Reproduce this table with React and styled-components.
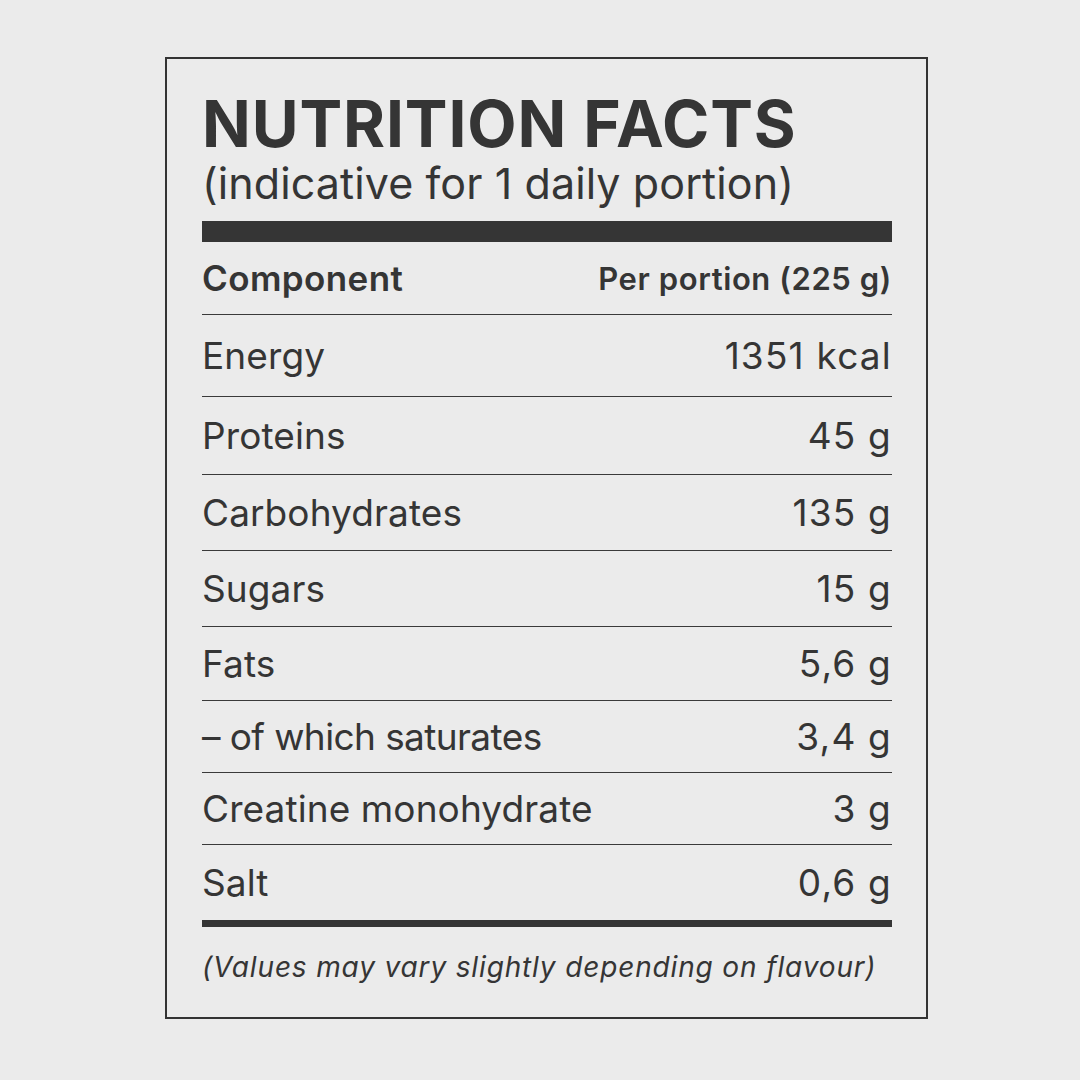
import React from "react";
import styled, { createGlobalStyle } from "styled-components";

const GlobalStyle = createGlobalStyle`
    html, body {
        margin: 0;
        padding: 0;
        background: #ebebeb;
    }
    body {
        font-family: Inter, "Noto Sans", sans-serif;
        color: #353535;
    }
`;

const Page = styled.main`
    width: 1080px;
    height: 1080px;
    box-sizing: border-box;
    padding: 57px 0 0 165px;
`;

const Label = styled.section`
    width: 763px;
    height: 962px;
    box-sizing: border-box;
    border: 2.5px solid #333;
    padding: 0 34px 0 35px;
    display: flex;
    flex-direction: column;
`;

const Title = styled.h1`
    margin: 30px 0 0;
    font-size: 64px;
    font-weight: 700;
    line-height: 70px;
    letter-spacing: 0.9px;
`;

const Subtitle = styled.p`
    margin: 0;
    font-size: 43px;
    font-weight: 400;
    line-height: 48px;
    letter-spacing: 0.1px;
`;

const ThickBar = styled.div`
    height: ${(p) => p.$h}px;
    background: #353535;
    margin-top: ${(p) => p.$mt}px;
`;

const Row = styled.div`
    display: flex;
    justify-content: space-between;
    align-items: center;
    box-sizing: border-box;
    height: ${(p) => p.$h}px;
    border-bottom: ${(p) => (p.$last ? "none" : "1.5px solid #3a3a3a")};
    font-size: ${(p) => (p.$head ? 35 : 37)}px;
    font-weight: ${(p) => (p.$head ? 600 : 400)};
    letter-spacing: ${(p) => (p.$head ? 0.4 : 0)}px;
`;

const Name = styled.span`
    letter-spacing: ${(p) => (p.$tight ? -0.6 : 0.1)}px;
`;

const Value = styled.span`
    font-size: ${(p) => (p.$head ? 31 : 37)}px;
    letter-spacing: ${(p) => (p.$head ? 0.6 : 1.2)}px;
`;

const Note = styled.p`
    margin: 23px 0 0;
    font-size: 28px;
    font-style: italic;
    letter-spacing: 0.85px;
`;

const rows = [
    ["Energy", "1351 kcal", 82],
    ["Proteins", "45 g", 78],
    ["Carbohydrates", "135 g", 76],
    ["Sugars", "15 g", 76],
    ["Fats", "5,6 g", 74],
    ["\u2013 of which saturates", "3,4 g", 72, true],
    ["Creatine monohydrate", "3 g", 72],
    ["Salt", "0,6 g", 75],
];

const App = () => {
    return (
        <Page>
            <GlobalStyle />
            <Label>
                <Title>NUTRITION FACTS</Title>
                <Subtitle>(indicative for 1 daily portion)</Subtitle>
                <ThickBar $h={21} $mt={14} />
                <Row $h={73} $head>
                    <span>Component</span>
                    <Value $head>Per portion (225 g)</Value>
                </Row>
                {rows.map(([name, val, h, tight], i) => (
                    <Row key={name} $h={h} $last={i === rows.length - 1}>
                        <Name $tight={tight}>{name}</Name>
                        <Value>{val}</Value>
                    </Row>
                ))}
                <ThickBar $h={7} $mt={0} />
                <Note>(Values may vary slightly depending on flavour)</Note>
            </Label>
        </Page>
    );
};

export default App;
